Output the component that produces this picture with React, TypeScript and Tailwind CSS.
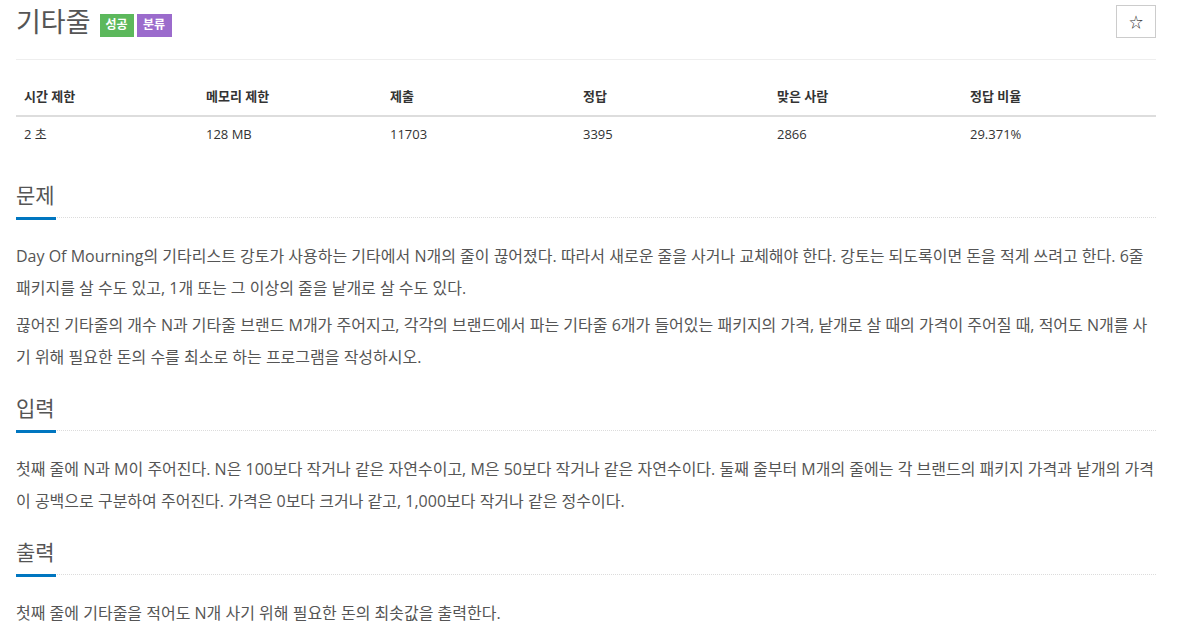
import React from "react";

const KO = { fontFamily: '"Open Sans", "Noto Sans CJK KR", sans-serif' };

const stats = [
  { label: "시간 제한", value: "2 초", w: "w-[182px]" },
  { label: "메모리 제한", value: "128 MB", w: "w-[184px]" },
  { label: "제출", value: "11703", w: "w-[193px]" },
  { label: "정답", value: "3395", w: "w-[194px]" },
  { label: "맞은 사람", value: "2866", w: "w-[193px]" },
  { label: "정답 비율", value: "29.371%", w: "w-[194px]" },
];

function SectionTitle({ title }: { title: string }) {
  return (
    <div className="relative mb-[23px] border-b border-dotted border-[#dcdcdc]">
      <h2 className="pb-[5px] text-[21px] leading-[33px] text-[#555]">{title}</h2>
      <span className="absolute -bottom-[3px] left-0 h-[3px] w-[40px] bg-[#0076c0]" />
    </div>
  );
}

export default function App() {
  return (
    <div className="min-h-[635px] bg-white pl-4 pr-[27px] text-[#555]" style={KO}>
      <div className="flex items-start justify-between border-b border-[#eee] pb-[15px]">
        <div className="flex items-center">
          <h1 className="mr-[9px] text-[27px] leading-[44px] text-[#555]">기타줄</h1>
          <span className="mr-[3px] mt-[6px] flex h-[23px] w-[34px] items-center justify-center bg-[#5cb85c] text-[12px] font-bold text-white">
            성공
          </span>
          <span className="mt-[6px] flex h-[23px] w-[35px] items-center justify-center bg-[#9b6bcc] text-[12px] font-bold text-white">
            분류
          </span>
        </div>
        <button className="mt-[5px] flex h-[33px] w-[40px] items-center justify-center border border-[#ccc] bg-white text-[14px] text-[#333]">
          ☆
        </button>
      </div>

      <table className="mt-[19px] w-full border-collapse text-[13px]">
        <thead>
          <tr className="border-b-2 border-[#ddd]">
            {stats.map((s) => (
              <th key={s.label} className={`${s.w} px-2 py-[8px] text-left font-bold text-[#333]`}>
                {s.label}
              </th>
            ))}
          </tr>
        </thead>
        <tbody>
          <tr>
            {stats.map((s) => (
              <td key={s.label} className="px-2 py-[8px] text-[#333]">
                {s.value}
              </td>
            ))}
          </tr>
        </tbody>
      </table>

      <div className="mt-[27px]">
        <SectionTitle title="문제" />
        <p className="mb-[6px] text-[16px] leading-[31.5px]">
          Day Of Mourning의 기타리스트 강토가 사용하는 기타에서 N개의 줄이 끊어졌다. 따라서 새로운 줄을 사거나 교체해야 한다. 강토는 되도록이면 돈을 적게 쓰려고 한다. 6줄 패키지를 살 수도 있고, 1개 또는 그 이상의 줄을 낱개로 살 수도 있다.
        </p>
        <p className="mb-[6px] text-[16px] leading-[31.5px]">
          끊어진 기타줄의 개수 N과 기타줄 브랜드 M개가 주어지고, 각각의 브랜드에서 파는 기타줄 6개가 들어있는 패키지의 가격, 낱개로 살 때의 가격이 주어질 때, 적어도 N개를 사기 위해 필요한 돈의 수를 최소로 하는 프로그램을 작성하시오.
        </p>
      </div>

      <div className="mt-[19px]">
        <SectionTitle title="입력" />
        <p className="mb-[6px] text-[16px] leading-[31.5px]">
          첫째 줄에 N과 M이 주어진다. N은 100보다 작거나 같은 자연수이고, M은 50보다 작거나 같은 자연수이다. 둘째 줄부터 M개의 줄에는 각 브랜드의 패키지 가격과 낱개의 가격이 공백으로 구분하여 주어진다. 가격은 0보다 크거나 같고, 1,000보다 작거나 같은 정수이다.
        </p>
      </div>

      <div className="mt-[19px]">
        <SectionTitle title="출력" />
        <p className="text-[16px] leading-[31.5px]">
          첫째 줄에 기타줄을 적어도 N개 사기 위해 필요한 돈의 최솟값을 출력한다.
        </p>
      </div>
    </div>
  );
}
